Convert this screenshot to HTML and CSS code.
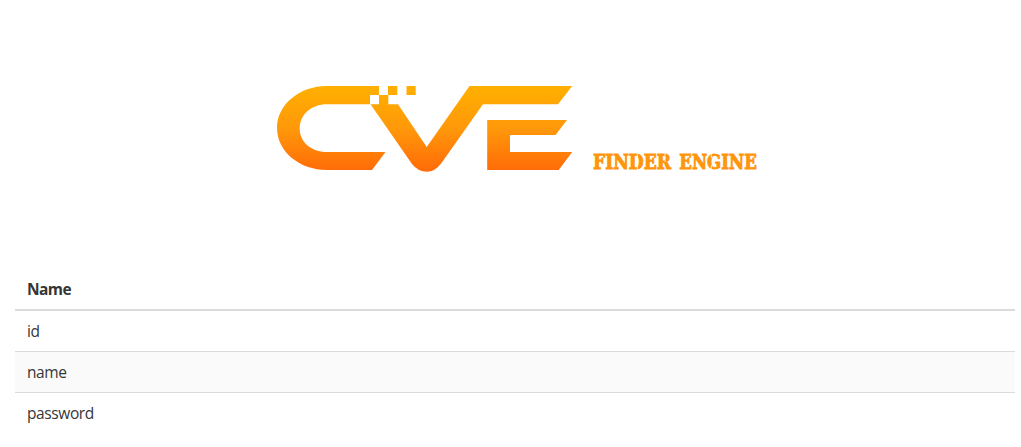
FILE: index.html
```html
<!DOCTYPE html>
<html lang="en">
<head>
<meta charset="utf-8">
<title>CVE Finder Engine</title>
<link rel="stylesheet" href="styles.css">
</head>
<body>
<header class="banner">
  <svg class="logo" viewBox="270 80 494 100" role="img" aria-label="CVE Finder Engine">
    <defs>
      <linearGradient id="flame" gradientUnits="userSpaceOnUse" x1="0" y1="86" x2="0" y2="171">
        <stop offset="0" stop-color="#ffb000"/>
        <stop offset=".5" stop-color="#ff980a"/>
        <stop offset="1" stop-color="#ff6b08"/>
      </linearGradient>
    </defs>
    <g fill="url(#flame)">
      <path d="M379 86V95H370V104.300H327C311 104.300 299.700 115 299.700 128.500C299.700 142 311 152 327 152H385.500L372 170H327C299 170 277 151 277 128C277 105 299 86 327 86Z"/>
      <path d="M379 95H388V86H397.300V95H388.300V104.300H398L426.700 147L469.500 86H572.200L558 104.300H483L441.500 163Q435 171.700 427 171.700Q418 171.700 412 164L370.500 104.300H379Z"/>
      <path d="M406.500 86H415.700V95H406.500Z"/>
      <path d="M487.200 120H567L555.500 135H510V152H572.200L558.700 170H487.200Z"/>
    </g>
    <g class="tagline">
      <text x="593" y="168.500" textLength="78" lengthAdjust="spacingAndGlyphs">FINDER</text>
      <text x="679.300" y="168.500" textLength="77.500" lengthAdjust="spacingAndGlyphs">ENGINE</text>
    </g>
    <!-- stencil bridges in the D, R and G -->
    <path class="bridges" d="M637.300 153V170M665 153V162M711.300 153V158M711.300 165V170"/>
  </svg>
</header>
<main class="results">
  <table class="table">
    <thead><tr><th>Name</th></tr></thead>
    <tbody>
      <tr><td>id</td></tr>
      <tr><td>name</td></tr>
      <tr><td>password</td></tr>
    </tbody>
  </table>
</main>
</body>
</html>
```
FILE: styles.css
```css
* { box-sizing: border-box; }
body {
  margin: 0;
  background: #fff;
  color: #363636;
  font: 15.5px/24px "Open Sans", "Noto Sans", sans-serif;
  overflow: hidden;
}
.banner {
  height: 269px;
  padding: 80px 0 0 270px;
}
.logo {
  display: block;
  width: 494px;
  height: 100px;
  overflow: visible;
}
.tagline {
  fill: #ff950a;
  stroke: #ff950a;
  stroke-width: .9px;
  font: bold 19.5px "DejaVu Serif", serif;
}
.bridges {
  fill: none;
  stroke: #fff;
  stroke-width: .8px;
}
.results { padding: 0 6px 0 15px; }
.table {
  width: 100%;
  border-collapse: separate;
  border-spacing: 0;
}
.table th,
.table td {
  padding: 8px 12px;
  text-align: left;
  vertical-align: top;
  border-bottom: 1px solid #dbdbdb;
}
.table th {
  border-bottom-width: 2px;
  font-weight: 700;
  letter-spacing: -.55px;
}
.table td { letter-spacing: -.4px; }
.table tbody tr:nth-child(even) { background: #fafafa; }
.table tbody tr:last-child td { border-bottom: 0; }
```
